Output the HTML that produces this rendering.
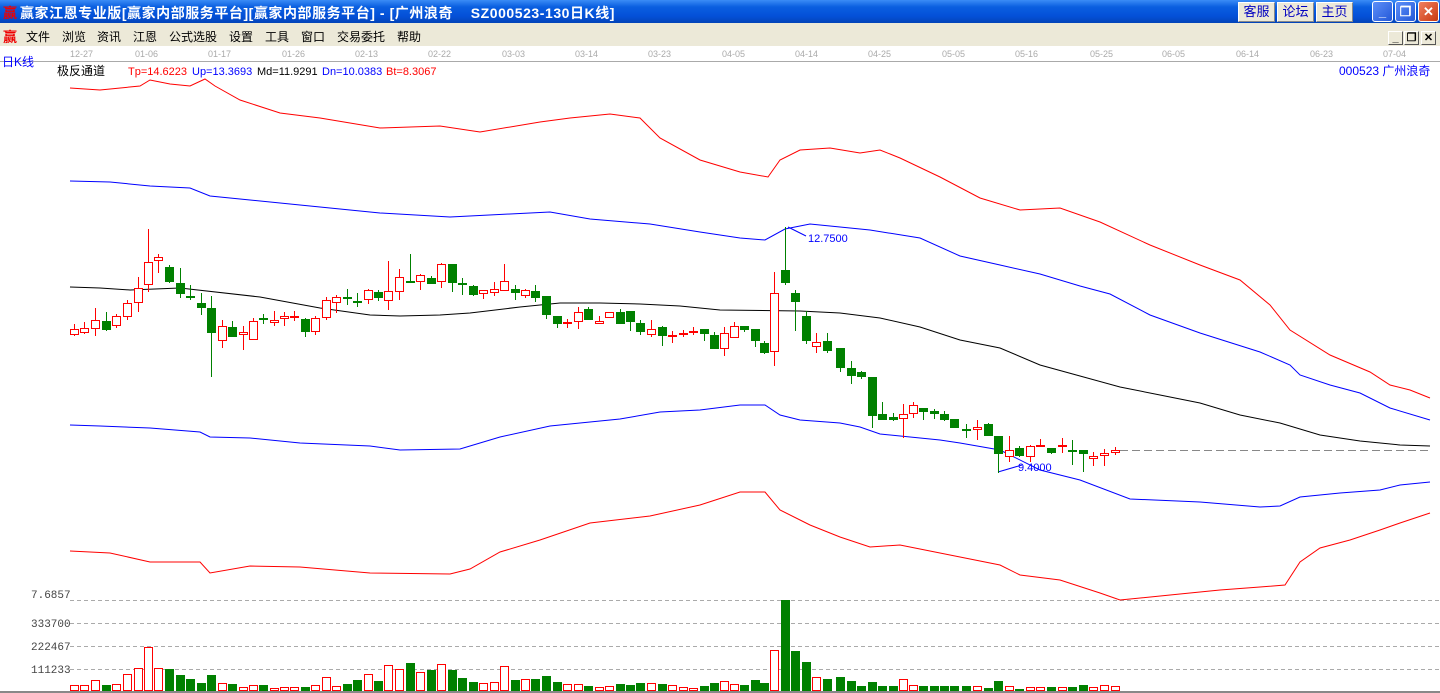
<!DOCTYPE html>
<html><head><meta charset="utf-8"><style>
*{margin:0;padding:0;box-sizing:border-box}
body{width:1440px;height:693px;overflow:hidden;background:#fff;font-family:"Liberation Sans","Noto Sans CJK SC",sans-serif;position:relative}
#title{position:absolute;left:0;top:0;width:1440px;height:23px;background:linear-gradient(#3a8cf6,#0a5fe0 30%,#0450d8 70%,#0344b8);}
#title .t{position:absolute;left:20px;top:3px;color:#fff;font-weight:bold;font-size:14px;white-space:pre;letter-spacing:0.55px}
.logo{position:absolute;color:#e00;font-weight:bold;font-size:14px}
.tb{position:absolute;top:2px;height:20px;width:37px;background:#ece9d8;border:1px solid #fff;border-right-color:#888;border-bottom-color:#888;color:#0000c0;font-size:13px;text-align:center;line-height:18px}
.wb{position:absolute;top:1px;width:21px;height:21px;border:1px solid #fff;border-radius:3px;background:linear-gradient(135deg,#5d8ff8,#2358d8);color:#fff;font-weight:bold;font-size:13px;text-align:center;line-height:19px}
#menu{position:absolute;left:0;top:23px;width:1440px;height:23px;background:#ece9d8;font-size:12px}
#menu span{position:absolute;top:5px}
.mb{position:absolute;top:31px;width:15px;height:14px;background:#ece9d8;border:1px solid #fff;border-right-color:#555;border-bottom-color:#555;font-size:11px;text-align:center;line-height:12px;font-weight:bold}
svg{position:absolute;left:0;top:0}
</style></head><body>
<div id="title"><span class="logo" style="left:3px;top:3px">赢</span><span class="t">赢家江恩专业版[赢家内部服务平台][赢家内部服务平台] - [广州浪奇    SZ000523-130日K线]</span>
<div class="tb" style="left:1238px">客服</div><div class="tb" style="left:1277px">论坛</div><div class="tb" style="left:1316px">主页</div>
<div class="wb" style="left:1372px">_</div><div class="wb" style="left:1395px">❐</div><div class="wb" style="left:1418px;background:linear-gradient(135deg,#f08060,#c83810)">✕</div>
</div>
<div id="menu"><span class="logo" style="left:3px;top:4px;font-size:14px">赢</span>
<span style="left:26px">文件</span><span style="left:62px">浏览</span><span style="left:97px">资讯</span><span style="left:133px">江恩</span><span style="left:169px">公式选股</span><span style="left:229px">设置</span><span style="left:265px">工具</span><span style="left:301px">窗口</span><span style="left:337px">交易委托</span><span style="left:397px">帮助</span>
</div>
<div class="mb" style="left:1388px">_</div><div class="mb" style="left:1404px">❐</div><div class="mb" style="left:1421px">✕</div>
<svg id="c" width="1440" height="693" xmlns="http://www.w3.org/2000/svg" font-family="Liberation Sans, Noto Sans CJK SC, sans-serif">
<line x1="0" y1="61.5" x2="1440" y2="61.5" stroke="#aaa"/>
<g font-size="9" fill="#aaa">
<text x="70" y="57">12-27</text><text x="135" y="57">01-06</text><text x="208" y="57">01-17</text><text x="282" y="57">01-26</text><text x="355" y="57">02-13</text><text x="428" y="57">02-22</text><text x="502" y="57">03-03</text><text x="575" y="57">03-14</text><text x="648" y="57">03-23</text><text x="722" y="57">04-05</text><text x="795" y="57">04-14</text><text x="868" y="57">04-25</text><text x="942" y="57">05-05</text><text x="1015" y="57">05-16</text><text x="1090" y="57">05-25</text><text x="1162" y="57">06-05</text><text x="1236" y="57">06-14</text><text x="1310" y="57">06-23</text><text x="1383" y="57">07-04</text>
</g>
<text x="2" y="66" font-size="12" fill="#0000ff">日K线</text>
<text x="57" y="75" font-size="12" fill="#000">极反通道</text>
<g font-size="11"><text x="128" y="75" fill="#f00">Tp=14.6223</text><text x="192" y="75" fill="#00f">Up=13.3693</text><text x="257" y="75" fill="#000">Md=11.9291</text><text x="322" y="75" fill="#00f">Dn=10.0383</text><text x="386" y="75" fill="#f00">Bt=8.3067</text></g>
<text x="1339" y="75" font-size="12" fill="#0000ff">000523 广州浪奇</text>
<g font-size="11" fill="#444" font-family="Liberation Mono, monospace"><text x="31" y="598">7.6857</text><text x="31" y="627">333700</text><text x="31" y="650">222467</text><text x="31" y="673">111233</text></g>
<g stroke="#aaa" stroke-dasharray="4,3"><line x1="70" y1="600.5" x2="1440" y2="600.5"/><line x1="70" y1="623.5" x2="1440" y2="623.5"/><line x1="70" y1="646.5" x2="1440" y2="646.5"/><line x1="70" y1="669.5" x2="1440" y2="669.5"/><line x1="1120" y1="450.5" x2="1432" y2="450.5" stroke="#888" stroke-dasharray="8,4"/></g>
<line x1="0" y1="692" x2="1440" y2="692" stroke="#888" stroke-width="2"/>
<text x="808" y="242" font-size="11" fill="#0000ff">12.7500</text>
<text x="1018" y="471" font-size="11" fill="#0000ff">9.4000</text>
<g stroke="#00f" fill="none"><polyline points="788,227 806,236"/><polyline points="998,472 1022,465"/></g>
<g id="g"></g>
</svg>
<script>
var g=document.getElementById('g'),h='';
function pl(c,p){h+='<polyline fill="none" stroke="'+c+'" stroke-width="1" points="'+p.map(function(a){return a.join(',')}).join(' ')+'"/>';}
pl('#f00',[[70,88],[100,90],[140,86],[150,80],[170,84],[190,86],[205,79],[215,86],[240,100],[280,113],[320,118],[380,128],[440,126],[480,132],[540,122],[570,118],[610,114],[640,118],[660,138],[700,160],[740,172],[768,177],[780,160],[800,150],[830,148],[860,153],[880,150],[900,158],[940,177],[980,198],[1020,210],[1060,208],[1100,222],[1150,245],[1200,265],[1240,280],[1270,305],[1290,330],[1330,355],[1370,372],[1390,385],[1410,390],[1430,398]]);
pl('#00f',[[70,181],[110,182],[150,186],[190,188],[210,196],[250,200],[300,205],[380,213],[450,217],[510,214],[550,212],[590,219],[650,224],[700,232],[740,238],[765,240],[785,229],[810,224],[840,227],[870,230],[920,238],[960,256],[1000,265],[1040,274],[1080,286],[1110,294],[1150,315],[1200,333],[1260,352],[1290,365],[1300,375],[1330,385],[1360,393],[1390,408],[1430,420]]);
pl('#000',[[70,287],[100,288],[130,290],[180,288],[260,297],[320,308],[370,315],[400,316],[440,315],[470,313],[520,307],[560,303],[600,303],[640,304],[680,306],[720,310],[800,311],[840,313],[880,318],[920,327],[960,340],[1000,348],[1040,365],[1080,376],[1120,387],[1160,395],[1200,403],[1240,415],[1280,423],[1320,435],[1360,441],[1400,445],[1430,446]]);
pl('#00f',[[70,425],[100,426],[150,428],[200,432],[210,437],[250,438],[300,443],[370,446],[400,450],[460,449],[500,437],[550,426],[620,419],[660,412],[700,410],[740,405],[765,405],[780,415],[800,420],[840,423],[860,427],[880,434],[940,440],[960,443],[1000,450],[1040,470],[1080,480],[1130,499],[1200,502],[1260,507],[1280,506],[1300,497],[1340,493],[1380,490],[1400,485],[1430,482]]);
pl('#f00',[[70,551],[110,553],[150,562],[200,562],[210,573],[250,566],[300,567],[370,573],[450,574],[470,569],[500,552],[540,540],[590,523],[650,516],[700,505],[740,492],[765,492],[780,510],[810,525],[840,537],[870,547],[900,545],[960,557],[1000,565],[1020,575],[1060,580],[1100,593],[1120,600],[1180,594],[1220,590],[1260,587],[1285,585],[1300,562],[1320,548],[1350,540],[1380,530],[1400,523],[1430,513]]);
var C=[[74,'r',329,334,324,336],[84,'r',328,332,322,334],[95,'r',320,328,308,336],[106,'g',321,329,312,331],[116,'r',316,325,314,328],[127,'r',303,316,300,320],[138,'r',288,302,277,312],[148,'r',262,284,229,292],[158,'r',257,260,254,273],[169,'g',267,281,265,283],[180,'g',283,293,268,298],[190,'g',296,297,285,300],[201,'g',303,307,293,315],[211,'g',308,332,296,377],[222,'r',326,340,320,348],[232,'g',327,336,321,337],[243,'r',332,334,326,350],[253,'r',321,339,318,339],[263,'g',318,319,314,324],[274,'r',320,322,311,326],[284,'r',316,318,312,326],[294,'r',316,317,311,321],[305,'g',319,331,318,337],[315,'r',318,331,316,335],[326,'r',300,317,297,320],[336,'r',297,302,295,313],[347,'g',297,298,289,305],[357,'g',301,302,293,307],[368,'r',290,299,289,304],[378,'g',292,297,290,301],[388,'r',291,300,261,310],[399,'r',277,291,269,300],[410,'g',281,282,254,283],[420,'r',275,281,274,290],[431,'g',278,283,276,284],[441,'r',264,281,263,288],[452,'g',264,282,264,292],[462,'g',283,284,278,295],[473,'g',286,294,285,296],[483,'r',290,293,290,299],[494,'r',289,292,282,296],[504,'r',281,290,264,291],[515,'g',289,292,285,300],[525,'r',290,295,289,298],[535,'g',291,297,285,302],[546,'g',296,314,296,319],[557,'g',316,323,316,328],[567,'r',322,323,319,328],[578,'r',312,321,307,329],[588,'g',309,319,307,320],[599,'r',321,323,316,324],[609,'r',312,317,312,318],[620,'g',312,323,309,323],[630,'g',311,321,311,331],[640,'g',323,331,320,335],[651,'r',329,334,320,337],[662,'g',327,335,326,346],[672,'r',335,336,331,343],[683,'r',333,334,330,337],[693,'r',331,332,327,335],[704,'g',329,333,329,341],[714,'g',335,348,332,349],[724,'r',333,348,327,356],[734,'r',326,337,322,338],[744,'g',326,329,326,332],[755,'g',329,340,329,347],[764,'g',343,352,341,354],[774,'r',293,351,272,366],[785,'g',270,282,227,285],[795,'g',293,301,290,331],[806,'g',316,340,311,344],[816,'r',342,346,333,353],[827,'g',341,350,333,353],[840,'g',348,367,348,372],[851,'g',368,375,361,384],[861,'g',372,376,371,379],[872,'g',377,415,377,428],[882,'g',414,419,402,419],[893,'g',417,419,413,421],[903,'r',414,418,404,438],[913,'r',405,413,402,418],[923,'g',408,411,408,420],[934,'g',411,413,409,419],[944,'g',414,419,411,421],[954,'g',419,427,419,427],[966,'g',429,430,424,438],[977,'r',427,429,420,440],[988,'g',424,435,423,436],[998,'g',436,453,436,473],[1009,'r',450,456,436,462],[1019,'g',448,455,446,457],[1030,'r',446,456,445,462],[1040,'r',445,446,439,446],[1051,'g',448,452,448,454],[1062,'r',445,446,438,453],[1072,'g',450,451,440,465],[1083,'g',450,453,450,472],[1093,'r',456,458,452,466],[1104,'r',453,455,449,466],[1115,'r',450,452,447,455]];
var V=[685,685,680,685,684,674,668,647,668,669,675,679,683,675,683,684,687,685,685,688,687,687,687,685,677,686,684,680,674,681,665,669,663,672,670,664,670,678,682,683,682,666,680,679,679,676,682,684,684,686,687,686,684,685,683,683,684,685,687,688,686,683,681,684,685,680,683,650,600,651,662,677,679,677,681,686,682,686,686,679,685,686,686,686,686,686,686,688,681,686,689,687,687,687,687,687,685,687,685,686];
C.forEach(function(c,i){var col=c[1]=='r'?'#f00':'#008000',x=c[0];
h+='<line x1="'+(x+.5)+'" y1="'+c[4]+'" x2="'+(x+.5)+'" y2="'+c[5]+'" stroke="'+col+'"/>';
var bh=Math.max(c[3]-c[2],1);
if(c[1]=='r')h+='<rect x="'+(x-3.5)+'" y="'+(c[2]+.5)+'" width="8" height="'+bh+'" fill="#fff" stroke="#f00"/>';
else h+='<rect x="'+(x-4)+'" y="'+c[2]+'" width="9" height="'+(bh+1)+'" fill="#008000"/>';
var t=V[i];
if(c[1]=='r')h+='<rect x="'+(x-3.5)+'" y="'+(t+.5)+'" width="8" height="'+(691-t-1)+'" fill="#fff" stroke="#f00"/>';
else h+='<rect x="'+(x-4)+'" y="'+t+'" width="9" height="'+(691-t)+'" fill="#008000"/>';
});
g.innerHTML=h;
</script>
</body></html>
